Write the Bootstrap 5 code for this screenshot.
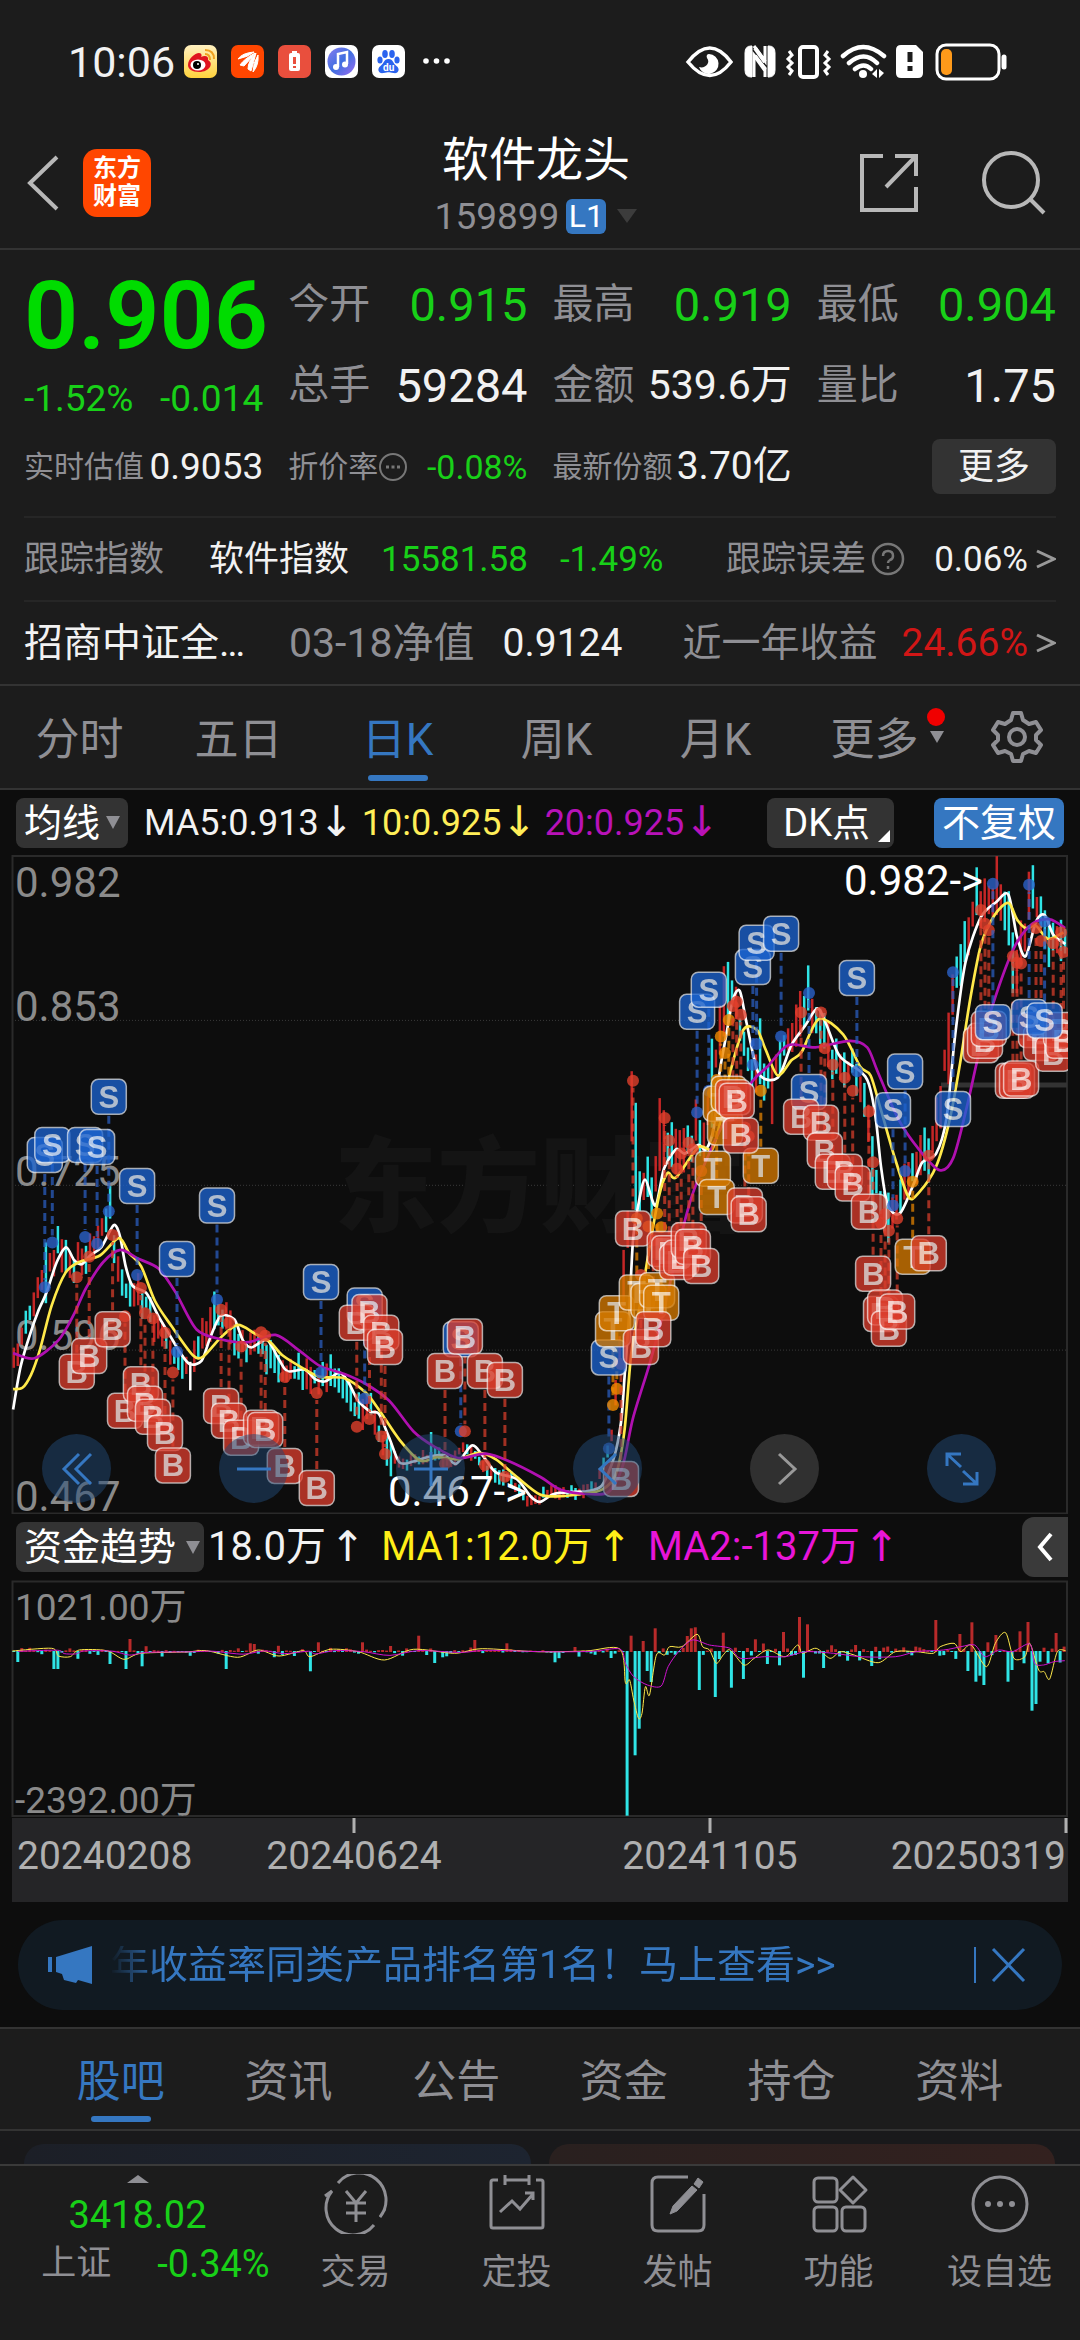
<!DOCTYPE html>
<html lang="zh-CN" data-bs-theme="dark">
<head>
<meta charset="utf-8">
<meta name="viewport" content="width=device-width, initial-scale=1">
<title>软件龙头 159899</title>
<link rel="stylesheet" href="https://cdn.jsdelivr.net/npm/bootstrap@5.3.0/dist/css/bootstrap.min.css">
<style>
:root{--ink:#f2f2f2;--dim:#8f8f94;--up:#d11616;--down:#18d018;--accent:#3577c1;--panel:#1c1c1c;--deep:#0d0d0d;--rule:#333}
body{font-family:Roboto,"Noto Sans CJK SC",sans-serif;background:var(--panel);color:var(--ink);line-height:1;overflow-x:hidden}
button,a,select{font-family:inherit;color:inherit;line-height:inherit}
a{text-decoration:none}
svg{display:block;flex:none}
.plain{background:none;border:0;padding:0}
.dim{color:var(--dim)}.down{color:var(--down)}.rise{color:var(--up)}
.status{height:122px;padding:0 70px 0 68px}
.clock{font-size:43px;margin-right:9px;padding-top:2px}
.app-ico{margin-right:14px}
.head{height:128px;border-bottom:2px solid var(--rule);padding:0 34px 0 26px;display:grid;grid-template-columns:1fr auto 1fr;align-items:center}
.head>.side{padding-bottom:5px}
.logo{width:68px;height:68px;border-radius:14px;background:#ff4600;color:#fff;font-size:24px;line-height:28px;font-weight:700;padding-top:5px;text-align:center;margin-left:24px}
.ttl{font-size:47px;line-height:58px;font-weight:400;margin:0;padding-top:4px}
.code{font-size:37px;height:54px;gap:7px}
.lv{background:var(--accent);color:#fff;width:40px;height:35px;border-radius:6px;font-size:32px;line-height:35px;text-align:center}
.tri{width:0;height:0;border:10px solid transparent;border-top:14px solid #3c3c3c;border-bottom:0}
.quote{padding:14px 24px 0;border-bottom:2px solid var(--rule)}
.q4{display:grid;grid-template-columns:repeat(4,minmax(0,1fr));column-gap:25px}
.q4>div{display:flex;justify-content:space-between;align-items:center;white-space:nowrap}
.est{height:90px;padding-bottom:9px}
.big{font-size:95px;font-weight:600;color:#00dc00;line-height:104px}
.stack{grid-row:span 2;flex-direction:column;align-items:stretch!important;justify-content:flex-start!important}
.f41{font-size:41px;height:81px}.v46{font-size:47px}.v40{font-size:41px}
.f36{font-size:37px}.f30{font-size:30px}.f35{font-size:35px}.f39{font-size:39px}.f34{font-size:34px}
.more{background:#333;border-radius:8px;width:124px;height:55px;font-size:36px;margin-left:auto}
.line{border-top:2px solid #262626;height:84px;display:flex;align-items:center;white-space:nowrap}
.period{height:104px;border-bottom:2px solid var(--rule);display:grid;grid-template-columns:repeat(6,159fr) 126fr;font-size:44px}
.tabbar{height:104px;border:2px solid var(--rule);border-width:2px 0;display:grid;grid-template-columns:repeat(6,1fr);padding:0 37px;font-size:44px}
.tab-i{display:flex;align-items:center;justify-content:center;position:relative;color:var(--dim);padding-top:5px}
button.tab-i{padding-top:0}
.tab-i.on{color:var(--accent)}
.tab-i.on::after{content:"";position:absolute;bottom:7px;width:60px;height:6px;border-radius:3px;background:var(--accent)}
.dot{position:absolute;right:9px;top:22px;width:18px;height:18px;border-radius:50%;background:#f00000}
.caret{position:absolute;right:10px;top:45px;border:7px solid transparent;border-top:12px solid #8f8f94;border-bottom:0}
.deep{background:var(--deep);padding-bottom:17px}
.bar1{height:60px;padding:5px 16px 0;font-size:36px;white-space:nowrap}
.bar2{height:66px;padding:0 12px 0 16px;font-size:40px;white-space:nowrap}
.chip{background:#333;border-radius:8px;height:50px;font-size:38px;padding:0 8px;color:#fff;display:flex;align-items:center;gap:2px;position:relative}
.chip i{border:7px solid transparent;border-top:13px solid #8f8f94;border-bottom:0}
.arw{font-family:"DejaVu Sans",sans-serif;font-size:42px;line-height:36px;vertical-align:-1px}
.fold{width:46px;height:60px;background:#3a3a3a;border-radius:12px 0 0 12px;display:flex;align-items:center;justify-content:center}
.ctl{position:absolute;left:42px;right:84px;bottom:11px;display:flex;justify-content:space-between}
.ctl button{width:69px;height:69px;border-radius:50%;background:rgba(34,74,118,.5);display:flex;align-items:center;justify-content:center;color:#3577c1}
.ctl .off{background:rgba(58,58,58,.8);color:#999}
.note{margin:18px 18px 0;height:90px;border-radius:45px;background:#111a22;color:var(--accent);font-size:39px;padding:0 36px 0 28px;white-space:nowrap}
.note a{color:var(--accent);-webkit-mask-image:linear-gradient(90deg,transparent,#000 50px);mask-image:linear-gradient(90deg,transparent,#000 50px)}
.peek{height:33px;padding:13px 25px 0 24px;gap:18px;background:#19191b}
.peek div{flex:1;border-radius:26px 26px 0 0;background:linear-gradient(90deg,#1c1f27,#1d2430)}
.peek div+div{background:linear-gradient(90deg,#29201f,#33211f)}
.foot{border-top:2px solid #3a3a3a;display:grid;grid-template-columns:275fr repeat(5,161fr);height:176px;font-size:35px}
.foot a{display:flex;flex-direction:column;align-items:center;color:var(--dim);padding-top:8px}
.foot svg{margin-bottom:21px}
.foot .upmark{margin:1px 0 12px}
.idx{font-size:38px;line-height:40px}
.idx-row{gap:46px;line-height:40px;padding:9px 0 0 36px}
</style>
<script src="https://cdn.jsdelivr.net/npm/bootstrap@5.3.0/dist/js/bootstrap.bundle.min.js"></script>
</head>
<body>
<div class="status d-flex align-items-center">
  <span class="clock">10:06</span>
  <svg class="app-ico" width="33" height="33" viewBox="0 0 33 33"><defs><linearGradient id="wb" x2="0" y2="1"><stop stop-color="#fff0c0"/><stop offset="1" stop-color="#ffd23c"/></linearGradient></defs><rect width="33" height="33" rx="7" fill="url(#wb)"/><path d="M4 20C4 14 11 8 15 8c3 0 3 3 2 4 4-2 8-1 7 3 6 3 2 12-9 12C8 27 4 24 4 20z" fill="#e01420"/><ellipse cx="14" cy="20" rx="7.500" ry="5.500" fill="#fff"/><circle cx="13" cy="20" r="4" fill="#000"/><circle cx="14" cy="19" r="1" fill="#fff"/><path d="M21 9q5 0 5 6M21 5q9 0 9 9" stroke="#f0a020" stroke-width="2" fill="none"/></svg>
  <svg class="app-ico" width="33" height="33" viewBox="0 0 33 33"><rect width="33" height="33" rx="7" fill="#ff4600"/><path d="M7 14Q11 8 23 7Q17 12 7 14zM9 20Q13 14 24 8Q19 15 13 21zM17 24Q17 16 25 8Q23 16 20 26zM22 27Q22 18 27 10Q28 20 22 27z" fill="#fff" stroke="#fff"/></svg>
  <svg class="app-ico" width="33" height="33" viewBox="0 0 33 33"><rect width="33" height="33" rx="7" fill="#e94f3d"/><rect x="11" y="8" width="11" height="18" rx="2" fill="#fff"/><path d="M14 6h5v3h-5z" fill="#fff"/><path d="M16.500 12v7M16.500 21v2" stroke="#e94f3d" stroke-width="3"/></svg>
  <svg class="app-ico" width="33" height="33" viewBox="0 0 33 33"><defs><linearGradient id="mu" x2="1" y2="1"><stop stop-color="#8a7cf0"/><stop offset=".5" stop-color="#3f6fe0"/><stop offset="1" stop-color="#9b6cf0"/></linearGradient></defs><rect width="33" height="33" rx="7" fill="#fff"/><circle cx="16.500" cy="16.500" r="14" fill="url(#mu)"/><path d="M13 22V9l9-2v12" stroke="#fff" stroke-width="2.500" fill="none"/><circle cx="11" cy="22" r="3" fill="#fff"/><circle cx="20" cy="19.500" r="3" fill="#fff"/></svg>
  <svg class="app-ico" width="33" height="33" viewBox="0 0 33 33"><rect width="33" height="33" rx="7" fill="#fff"/><g fill="#2a63ee"><ellipse cx="13" cy="9" rx="2.800" ry="4"/><ellipse cx="20" cy="9" rx="2.800" ry="4"/><ellipse cx="8" cy="15" rx="2.600" ry="3.600"/><ellipse cx="25" cy="15" rx="2.600" ry="3.600"/><path d="M16.500 14c5 0 4 4 8 7s2 8-3 7-5-1-10 0-7-4-3-7 3-7 8-7z"/></g><text x="11" y="26" font-size="10" font-weight="700" fill="#fff">du</text></svg>
  <svg class="ms-1" width="28" height="8" viewBox="0 0 28 8" fill="#fff"><circle cx="3" cy="4" r="2.800"/><circle cx="13.500" cy="4" r="2.800"/><circle cx="24" cy="4" r="2.800"/></svg>
  <svg class="ms-auto" width="325" height="40" viewBox="0 0 325 40" fill="none" stroke="#fff" stroke-width="3.500">
    <path d="M3 21Q25-7 46 21Q25 48 3 21z"/><path d="M24 13a10 10 0 1 1-10 13c6 2 12-4 8-9-1-2 0-4 2-4z" fill="#fff" stroke="none"/>
    <path d="M66 5q-6 0-6 7v17q0 7 6 7h1V5zM84 5q6 0 6 7v17q0 7-6 7h-1V5z" fill="#fff" stroke-width="1"/><path d="M69 36V14l11 13v9M69 5l11 15V5" stroke-width="3"/><path d="M70 7l10 14M70 15l10 14" stroke-width="4"/>
    <rect x="115" y="6" width="17" height="30" rx="3" stroke-width="4"/><path d="M104 10l3 4-4 4 4 4-4 4 4 4-3 4M143 10l-3 4 4 4-4 4 4 4-4 4 3 4" stroke-width="3"/>
    <path d="M158 15q20-18 41 0M164 22q15-13 28 0M170 28q9-7 16 0" stroke-width="4.500" stroke-linecap="round"/><circle cx="178" cy="33" r="4" fill="#fff" stroke="none"/><path d="M187 33l5-5v9zM194 28v9l5-5z" fill="#fff" stroke="none"/>
    <path d="M216 4h15l7 7v21q0 5-5 5h-17q-5 0-5-5V9q0-5 5-5z" fill="#fff" stroke="none"/><path d="M225 11v10M225 25v5" stroke="#1c1c1c" stroke-width="5"/>
    <rect x="252" y="4" width="62" height="34" rx="9" stroke-width="3"/><rect x="256" y="8" width="11" height="26" rx="5" fill="#ff9a1a" stroke="none"/><path d="M319 16v10" stroke-width="5" stroke-linecap="round"/>
  </svg>
</div>

<header class="head">
  <div class="side d-flex align-items-center">
    <button class="plain" aria-label="返回"><svg width="33" height="58" viewBox="0 0 33 58" fill="none" stroke="#b8b8b8" stroke-width="4"><path d="M31 3L4 29l27 26"/></svg></button>
    <div class="logo">东方<br>财富</div>
  </div>
  <div class="text-center">
    <h1 class="ttl">软件龙头</h1>
    <div class="code d-flex align-items-center justify-content-center dim"><span>159899</span><span class="lv">L1</span><span class="tri ms-1"></span></div>
  </div>
  <div class="side d-flex justify-content-end align-items-center" style="gap:62px">
    <button class="plain" aria-label="分享"><svg width="60" height="60" viewBox="0 0 60 60" fill="none" stroke="#b8b8b8" stroke-width="4"><path d="M24 3H3v54h54V34M36 3h21v20M57 3L27 34"/></svg></button>
    <button class="plain" aria-label="搜索"><svg width="65" height="65" viewBox="0 0 65 65" fill="none" stroke="#b8b8b8" stroke-width="4"><circle cx="30" cy="30" r="27"/><path d="M49 49l14 14"/></svg></button>
  </div>
</header>

<section class="quote">
  <div class="q4">
    <div class="stack"><div class="big">0.906</div><div class="d-flex justify-content-between f36 down pt-2 mt-1"><span>-1.52%</span><span>-0.014</span></div></div>
    <div class="f41"><span class="dim">今开</span><span class="v46 down">0.915</span></div>
    <div class="f41"><span class="dim">最高</span><span class="v46 down">0.919</span></div>
    <div class="f41"><span class="dim">最低</span><span class="v46 down">0.904</span></div>
    <div class="f41"><span class="dim">总手</span><span class="v46">59284</span></div>
    <div class="f41"><span class="dim">金额</span><span class="v40">539.6万</span></div>
    <div class="f41"><span class="dim">量比</span><span class="v46">1.75</span></div>
  </div>
  <div class="q4 est">
    <div class="f30"><span class="dim">实时估值</span><span class="f36">0.9053</span></div>
    <div class="f30"><span class="dim d-flex">折价率<svg width="30" height="30" viewBox="0 0 30 30" fill="none" stroke="#777" stroke-width="2"><circle cx="15" cy="15" r="13"/><path d="M8 15h3M13.500 15h3M19 15h3" stroke-width="3"/></svg></span><span class="f34 down">-0.08%</span></div>
    <div class="f30"><span class="dim">最新份额</span><span class="f39">3.70亿</span></div>
    <div><button class="plain more">更多</button></div>
  </div>
  <a href="#" class="line f35"><span class="dim" style="width:185px">跟踪指数</span><span>软件指数</span><span class="down ms-4 ps-2">15581.58</span><span class="down ms-4 ps-2">-1.49%</span><span class="dim ms-auto d-flex align-items-center">跟踪误差<svg class="ms-1" width="36" height="36" viewBox="0 0 36 36" fill="none" stroke="#777" stroke-width="2.500"><circle cx="18" cy="18" r="15"/><path d="M13 15q0-5 5-5t5 5q0 3-3 4-2 1-2 3M18 25v3"/></svg></span><span class="ms-4 ps-1">0.06%</span><svg class="ms-2" width="20" height="20" viewBox="0 0 20 20" fill="none" stroke="#999" stroke-width="3"><path d="M1 2l17 8-17 8"/></svg></a>
  <a href="#" class="line f39"><span style="width:265px">招商中证全…</span><span class="dim v40">03-18净值</span><span class="ms-4 ps-1">0.9124</span><span class="dim ms-auto">近一年收益</span><span class="rise ms-4">24.66%</span><svg class="ms-2" width="20" height="20" viewBox="0 0 20 20" fill="none" stroke="#999" stroke-width="3"><path d="M1 2l17 8-17 8"/></svg></a>
</section>

<nav class="period">
  <a class="tab-i" href="#">分时</a><a class="tab-i" href="#">五日</a><a class="tab-i on" href="#">日K</a><a class="tab-i" href="#">周K</a><a class="tab-i" href="#">月K</a>
  <a class="tab-i" href="#">更多<i class="dot"></i><i class="caret"></i></a>
  <button class="plain tab-i" aria-label="设置"><svg width="54" height="54" viewBox="0 0 54 54" fill="none" stroke="#8f8f94" stroke-width="4" stroke-linejoin="round"><path d="M23 3h8l2 7 6 4 7-2 5 8-5 5v5l5 5-5 8-7-2-6 3-2 7h-8l-2-7-6-3-7 2-5-8 5-5v-5l-5-5 5-8 7 2 6-4z"/><circle cx="27" cy="27" r="8"/></svg></button>
</nav>

<main class="deep">
  <div class="bar1 d-flex align-items-center">
    <button class="plain chip">均线<i class="ms-1"></i></button>
    <span class="ms-3">MA5:0.913<span class="arw">↓</span></span>
    <span class="ms-2" style="color:#ffee58">10:0.925<span class="arw">↓</span></span>
    <span class="ms-2" style="color:#b812b8">20:0.925<span class="arw">↓</span></span>
    <button class="plain chip ms-auto ps-3 pe-4">DK点<svg class="position-absolute bottom-0 end-0 m-1" width="12" height="14" fill="#fff"><path d="M12 0v12H0z"/></svg></button>
    <button class="plain chip px-2" style="background:#3577c1;margin-left:40px">不复权</button>
  </div>
  <div class="position-relative">
    <svg id="kline" width="100%" viewBox="0 0 1080 664" role="img" aria-label="日K线图"></svg>
    <div class="ctl">
      <button class="plain" aria-label="最早"><svg width="36" height="36" fill="none" stroke="currentColor" stroke-width="3"><path d="M20 3L5 18l15 15M32 3L17 18l15 15"/></svg></button>
      <button class="plain" aria-label="缩小"><svg width="36" height="36" fill="none" stroke="currentColor" stroke-width="3"><path d="M1 18h34"/></svg></button>
      <button class="plain" aria-label="放大"><svg width="36" height="36" fill="none" stroke="currentColor" stroke-width="3"><path d="M1 18h34M18 1v34"/></svg></button>
      <button class="plain" aria-label="向左"><svg width="36" height="36" fill="none" stroke="currentColor" stroke-width="3"><path d="M26 3L10 18l16 15"/></svg></button>
      <button class="plain off" aria-label="向右"><svg width="36" height="36" fill="none" stroke="currentColor" stroke-width="3"><path d="M12 3l16 15-16 15"/></svg></button>
      <button class="plain" aria-label="全屏"><svg width="36" height="36" fill="none" stroke="currentColor" stroke-width="3"><path d="M3 15V3h14M3 3l14 13M33 21v12H19M33 33L19 20"/></svg></button>
    </div>
  </div>
  <div class="bar2 d-flex align-items-center">
    <button class="plain chip f36 pe-1">资金趋势<i class="ms-2"></i></button>
    <span class="ms-1">18.0万<span class="arw ms-1">↑</span></span>
    <span class="ms-3" style="color:#ffee18">MA1:12.0万<span class="arw ms-1">↑</span></span>
    <span class="ms-3" style="color:#e815d8">MA2:-137万<span class="arw ms-1">↑</span></span>
    <button class="plain fold ms-auto" aria-label="展开"><svg width="18" height="30" fill="none" stroke="#fff" stroke-width="4"><path d="M15 2L4 15l11 13"/></svg></button>
  </div>
  <svg id="flow" width="100%" viewBox="0 0 1080 322" role="img" aria-label="资金趋势"></svg>
  <div class="note d-flex align-items-center">
    <svg width="48" height="40" viewBox="0 0 48 40" fill="#3577c1" class="me-3"><path d="M2 12h4v15H2zM10 12L46 1v38l-14-4-2 3-12-3-2-6-6-2z"/></svg>
    <a href="#">年收益率同类产品排名第1名！马上查看&gt;&gt;</a>
    <button class="plain ms-auto" aria-label="关闭"><svg width="52" height="36" viewBox="0 0 52 36" fill="none" stroke="#3577c1" stroke-width="3"><path d="M1 0v36" stroke-width="2"/><path d="M19 2l31 32M50 2L19 34"/></svg></button>
  </div>
</main>

<nav class="tabbar">
  <a class="tab-i on" href="#">股吧</a><a class="tab-i" href="#">资讯</a><a class="tab-i" href="#">公告</a><a class="tab-i" href="#">资金</a><a class="tab-i" href="#">持仓</a><a class="tab-i" href="#">资料</a>
</nav>
<div class="peek d-flex"><div></div><div></div></div>

<footer class="foot">
  <a href="#"><svg class="upmark" width="22" height="8" fill="#8f8f94"><path d="M11 0l11 8H0z"/></svg><span class="idx down">3418.02</span><span class="d-flex idx-row"><span>上证</span><span class="down idx">-0.34%</span></span></a>
  <a href="#"><svg width="66" height="60" viewBox="0 0 66 60" fill="none" stroke="#8f8f94" stroke-width="3"><path d="M15 9A27 27 0 0 1 57 43l5-8M51 51A27 27 0 0 1 9 17l-7 5M23 17l10 12 10-12M23 29h20M23 39h20M33 29v19"/></svg>交易</a>
  <a href="#"><svg width="60" height="60" viewBox="0 0 60 60" fill="none" stroke="#8f8f94" stroke-width="3"><path d="M11 6H6q-2 0-2 2v44q0 2 2 2h48q2 0 2-2V8q0-2-2-2h-5M18 6h24M18 1v10M42 1v10M13 38l12-11 8 8 13-15M38 19h8v7"/></svg>定投</a>
  <a href="#"><svg width="60" height="60" viewBox="0 0 60 60" fill="none" stroke="#8f8f94" stroke-width="3"><path d="M40 3H10q-6 0-6 6v42q0 6 6 6h40q6 0 6-6V20"/><path d="M50 4l5 4-4 6-5-4zM44 12l5 4-20 21-7 3 3-8z" fill="#8f8f94" stroke-width="1"/></svg>发帖</a>
  <a href="#"><svg width="60" height="60" viewBox="0 0 60 60" fill="none" stroke="#8f8f94" stroke-width="3"><rect x="5" y="4" width="23" height="24" rx="4"/><rect x="5" y="33" width="23" height="24" rx="4"/><rect x="33" y="33" width="23" height="24" rx="4"/><path d="M44 3l13 13-13 13-13-13z" stroke-linejoin="round"/></svg>功能</a>
  <a href="#"><svg width="60" height="60" viewBox="0 0 60 60" fill="none" stroke="#8f8f94" stroke-width="3"><circle cx="30" cy="30" r="27"/><g fill="#8f8f94" stroke="none"><circle cx="18" cy="30" r="3"/><circle cx="30" cy="30" r="3"/><circle cx="42" cy="30" r="3"/></g></svg>设自选</a>
</footer>

<script>
// Series are stored in chart units; X() and Y() turn them into view box units.
const X=v=>+(v*.3444).toFixed(1), Y=v=>+(v*.4337).toFixed(1);
const join=(a,b)=>a.concat(b.map(p=>[p[0]+1568,p[1]]));
let seed=11; const rnd=()=>(seed=(seed*16807)%2147483647)/2147483647;
function at(s,x){for(let i=1;i<s.length;i++)if(x<=s[i][0]){const[a,b]=s[i-1],[c,d]=s[i];return b+(d-b)*(x-a)/(c-a||1)}return s[s.length-1][1]}
function smooth(pts,fx,fy){const p=pts.map(q=>[fx(q[0]),fy(q[1])]);let d='M'+p[0];for(let i=0;i<p.length-1;i++){const a=p[i-1]||p[i],b=p[i],c=p[i+1],e=p[i+2]||c;d+=`C${(b[0]+(c[0]-a[0])/7).toFixed(1)},${(b[1]+(c[1]-a[1])/7).toFixed(1)} ${(c[0]-(e[0]-b[0])/7).toFixed(1)},${(c[1]-(e[1]-b[1])/7).toFixed(1)} ${c}`}return d}
const ma5=join([[38,1290],[60,1190],[90,1110],[110,1065],[135,1020],[165,950],[192,916],[215,945],[237,955],[262,935],[295,915],[330,865],[348,890],[365,960],[385,1005],[425,1022],[460,1075],[490,1115],[520,1155],[550,1185],[585,1178],[610,1125],[640,1075],[680,1082],[705,1130],[730,1147],[775,1130],[810,1175],[835,1202],[885,1198],[915,1220],[945,1225],[985,1205],[1010,1225],[1040,1270],[1075,1295],[1100,1300],[1130,1355],[1160,1412],[1200,1410],[1240,1400],[1290,1395],[1325,1415],[1370,1373],[1400,1395],[1440,1435],[1500,1450],[1540,1490]],
[[0,1503],[40,1485],[100,1480],[140,1478],[180,1465],[215,1400],[235,1320],[245,1220],[258,1080],[270,900],[285,820],[305,760],[335,820],[360,735],[395,690],[420,700],[460,680],[482,690],[505,640],[520,520],[540,430],[560,345],[580,325],[600,400],[635,515],[690,525],[730,450],[770,405],[805,365],[830,400],[870,475],[930,510],[955,540],[975,620],[990,730],[1010,820],[1045,838],[1085,770],[1110,720],[1150,700],[1180,620],[1205,430],[1235,260],[1280,155],[1325,120],[1360,103],[1385,200],[1410,245],[1440,165],[1465,150],[1490,195],[1525,217]]);
const ma10=join([[38,1243],[65,1240],[90,1210],[115,1155],[150,1050],[190,975],[230,950],[290,935],[345,895],[375,930],[410,960],[450,1040],[500,1100],[560,1165],[590,1168],[640,1125],[690,1095],[740,1115],[785,1135],[820,1165],[880,1195],[930,1215],[1000,1218],[1060,1250],[1100,1290],[1160,1360],[1220,1408],[1270,1400],[1330,1405],[1390,1390],[1440,1405],[1500,1445]],
[[0,1486],[60,1490],[120,1485],[180,1475],[220,1440],[245,1340],[265,1160],[290,1050],[315,930],[345,800],[370,745],[395,755],[460,685],[500,690],[525,620],[550,520],[590,415],[630,415],[655,460],[690,520],[730,485],[760,465],[810,390],[880,425],[930,500],[960,520],[990,600],[1030,710],[1070,800],[1100,790],[1150,730],[1190,620],[1220,490],[1250,340],[1280,220],[1320,150],[1360,122],[1385,160],[1410,180],[1440,175],[1475,205],[1520,190]]);
const ma20=join([[38,1160],[100,1172],[170,1130],[215,1070],[250,1010],[300,950],[350,922],[400,942],[460,965],[510,1020],[570,1105],[640,1128],[720,1135],[800,1118],[870,1155],[930,1190],[1000,1208],[1060,1230],[1130,1270],[1200,1340],[1260,1375],[1330,1402],[1410,1392],[1480,1410]],
[[0,1445],[60,1475],[140,1485],[200,1480],[240,1420],[270,1310],[320,1180],[360,1060],[400,920],[440,800],[480,720],[540,620],[620,530],[660,500],[720,450],[800,455],[900,440],[950,455],[980,510],[1040,620],[1100,690],[1160,738],[1200,710],[1240,590],[1280,450],[1330,320],[1380,220],[1430,170],[1480,160],[1525,180]]);
const spikes=[[130,905,1045,0],[165,867,930,0],[316,775,850,0],[618,1018,1105,0],[549,1180,1246,2],[1256,1342,1400,0],[1838,510,672,1],[1850,583,830,0],[1816,922,1060,1],[1885,707,800,0],[1919,572,740,1],[1931,600,745,1],[2001,635,700,0],[2024,575,670,1],[2070,435,640,0],[2106,268,430,1],[2117,258,400,0],[2210,388,540,0],[2245,500,632,1],[2326,325,430,1],[2349,266,370,0],[2535,660,860,0],[2582,790,905,0],[2756,375,540,1],[2836,40,150,0],[2848,95,180,1],[2895,14,150,1],[2930,95,220,0],[2942,190,330,0],[2953,230,330,1],[2989,50,160,1],[3000,35,135,0],[3046,160,270,0]];
let k='';
for(const y of[393,773,1153])k+=`<path d="M12 ${Y(y)}H1067" stroke="#3a3a3a" stroke-dasharray="1 2"/>`;
k+='<path d="M12.500 6H1067V663.500H12.500z" fill="none" stroke="#2a2a2a" stroke-width="2"/>';
k+='<text x="540" y="374" text-anchor="middle" font-size="103" font-weight="900" fill="#141414">东方财富</text><path d="M941 235H1067" stroke="#333" stroke-width="5"/>';
[['0.982',108],['0.853',394],['0.725',774],['0.596',1153],['0.467',1524]].forEach(l=>k+=`<text x="15" y="${Y(l[1])}" font-size="42" fill="#8a8a8a">${l[0]}</text>`);
for(let i=0,x=40;x<3094;i++,x+=11.65){
  const s=spikes.find(q=>Math.abs(q[0]-x)<5.9);let a,b,c;
  if(s){[,a,b,c]=s}else{const p=at(ma5,Math.min(x+22,3092)),v=(x>1570&&x<1780||x>1150&&x<1570?14:x>1800?42:30),m=p+(rnd()-.5)*v*.8;a=m-v*(.4+rnd());b=m+v*(.4+rnd());c=at(ma5,Math.min(x+35,3092))<p?(rnd()<.72):(rnd()<.32)}
  k+=`<path d="M${X(x)} ${Y(Math.max(14,a))}V${Y(Math.min(b,1532))}" stroke="${c===2?'#fff':c?'#c42626':'#2fe4e6'}" stroke-width="2.500"/>`}
[[ma5,'#fff'],[ma10,'#ffe94a'],[ma20,'#b010b0']].forEach(m=>k+=`<path d="${smooth(m[0],X,Y)}" fill="none" stroke="${m[1]}" stroke-width="2.700"/>`);
const R=a=>a.map(q=>[q[0]+1568,q[1],q[2]]);
const marks={
S:[[130,703,1008],[152,680,905],[247,680,892],[282,685,908],[316,569,833],[398,775,980],[514,943,1157],[630,820,1037],[932,996,1205],[1059,1050,1265],[1338,1128,1340]].concat(R([[200,1170,1380],[456,373,605],[490,322,555],[618,270,495],[629,214,447],[700,193,430],[781,558,330],[920,295,510],[1025,600,820],[1060,511,740],[1199,597,282]])),
T:R([[212,1105,1280],[223,1068,1242],[281,1020,850],[315,1040,868],[340,1015,838],[352,1044,870],[525,585,430],[537,640,468],[548,562,392],[502,735,560],[513,800,530],[641,728,555],[1082,938,765]]),
B:[[223,1203,985],[259,1167,938],[327,1105,888],[363,1293,1075],[409,1232,1010],[421,1277,1068],[444,1307,1080],[479,1344,1113],[502,1419,1205],[642,1282,1060],[665,1316,1090],[700,1355,1145],[758,1332,1112],[770,1337,1120],[827,1420,1215],[920,1471,1252],[1036,1090,1330],[1073,1065,1312],[1107,1113,1352],[1118,1146,1393],[1292,1201,1415],[1350,1122,1340],[1408,1201,1418],[1466,1222,1445]].concat(R([[235,1450,1185],[270,873,532],[293,1146,980],[329,1105,900],[362,920,618],[375,930,670],[398,950,735],[410,940,700],[432,900,675],[444,915,690],[468,959,740],[560,570,360],[571,578,350],[583,658,380],[595,820,640],[606,840,660],[758,615,375],[816,629,375],[827,693,457],[850,742,495],[885,742,525],[908,769,555],[955,834,603],[967,977,720],[990,1070,860],[1002,1055,840],[1013,1104,878],[1037,1064,850],[1129,930,705],[1280,450,138],[1292,440,170],[1303,412,185],[1373,532,245],[1385,532,260],[1397,527,262],[1440,415,180],[1455,445,210],[1490,470,215],[1513,415,190],[1520,440,235]])),
U:R([[1315,397,78],[1420,385,80],[1465,393,165]])};
const hue={S:['#2b62c9','#1c64d0'],U:['#2b62c9','#1c64d0'],T:['#f08a00','#d67a00'],B:['#e0402c','#da3d2c']};
let stems='',tags='';
for(const t of['S','T','B','U'])for(const[x,y,d]of marks[t]){
  const dir=d>y?1:-1,cx=X(x),cy=Y(y);
  stems+=`<path d="M${cx} ${cy+dir*19}V${Y(d)-dir*7}" stroke="${hue[t][0]}" stroke-width="3" stroke-dasharray="8 5" opacity=".7"/><circle cx="${cx}" cy="${Y(d)}" r="6" fill="${hue[t][0]}" opacity=".8"/>`;
  tags+=`<g opacity=".85"><rect x="${(cx-17.5).toFixed(1)}" y="${(cy-17.5).toFixed(1)}" width="35" height="35" rx="7" fill="${hue[t][1]}" fill-opacity=".9" stroke="#fff" stroke-opacity=".75" stroke-width="1.500"/><text x="${cx}" y="${(cy+11).toFixed(1)}" font-family="Liberation Sans" font-size="31" font-weight="700" fill="#fff" fill-opacity=".78" text-anchor="middle">${t==='U'?'S':t}</text></g>`}
k+=`<clipPath id="plot"><path d="M12 5H1068V664H12z"/></clipPath><g clip-path="url(#plot)">${stems}${tags}</g>`;
k+='<text x="844" y="45" font-size="42" fill="#fff">0.982-&gt;</text><text x="388" y="656" font-size="42" fill="#fff">0.467-&gt;</text>';
document.getElementById('kline').innerHTML=k;

// Capital flow: bars around the zero line, with two moving averages.
const FX=v=>+(v*.6888).toFixed(1), FY=v=>+(v/3-80).toFixed(1);
const big={25:486,77:507,83:507,159:492,182:507,188:417,205:499,362:430,368:432,327:507,449:514,461:427,525:427,606:407,630:489,688:420,733:430,803:487,885:474,908:947,914:407,920:766,926:686,931:423,937:513,943:546,949:385,996:408,1001:385,1007:382,1018:570,1036:591,1053:398,1059:563,1082:537,1094:418,1117:492,1129:496,1135:396,1158:351,1164:533,1170:498,1175:373,1193:504,1210:436,1228:482,1245:435,1263:545,1268:498,1361:360,1396:402,1408:513,1413:367,1419:545,1425:527,1431:555,1437:427,1443:243,1448:405,1465:545,1471:510,1478:394,1489:490,1495:366,1501:632,1506:612,1512:485,1524:490,1536:399};
let f='<path d="M12.500 1.500H1067V236H12.500z" fill="none" stroke="#2a2a2a" stroke-width="2"/><path d="M12 238H1068V322H12z" fill="#252527"/>';
f+='<g font-size="37" fill="#8a8a8a"><text x="15" y="40">1021.00万</text><text x="15" y="233">-2392.00万</text></g>';
const bars={},slot=x=>Math.round((x-20)/5.82);
for(const q in big)bars[slot(+q)]=big[q];
for(let i=0;i<263;i++){const x=20+i*5.82;if(x>1546)break;const v=bars[i]||453+(rnd()-.42)*(x>950?60:44)*rnd();
  const top=Math.min(v,453),bot=Math.max(v,456);f+=`<path d="M${FX(x)} ${FY(top)}V${FY(bot)}" stroke="${v<453?'#b82a2a':'#2fe4e6'}" stroke-width="3"/>`}
const tail1=[[900,447],[908,548],[914,540],[920,600],[927,655],[932,640],[937,560],[943,585],[953,465],[965,465],[972,440],[990,440],[1012,403],[1020,440],[1030,450],[1040,490],[1050,465],[1060,450],[1080,495],[1095,475],[1115,450],[1140,470],[1158,435],[1165,460],[1185,445],[1205,475],[1220,455],[1240,465],[1275,488],[1300,455],[1330,455],[1355,460],[1365,440],[1385,430],[1395,455],[1410,435],[1432,500],[1445,430],[1460,398],[1472,475],[1488,470],[1495,430],[1508,510],[1516,515],[1524,537],[1535,455],[1547,452]];
const tail2=[[900,447],[908,490],[920,530],[940,555],[960,558],[970,500],[985,455],[1005,420],[1030,435],[1060,445],[1075,475],[1110,470],[1140,470],[1170,455],[1210,460],[1250,470],[1300,470],[1330,455],[1370,450],[1395,440],[1415,435],[1430,470],[1450,450],[1470,455],[1495,432],[1502,490],[1515,495],[1530,485],[1546,482]];
const h1=[[18,453],[75,445],[85,468],[102,470],[115,450],[155,452],[180,478],[205,460],[270,456],[300,452],[345,472],[375,450],[405,468],[440,452],[450,470],[480,448],[520,455],[558,480],[600,448],[660,460],[700,446],[780,455],[850,453]];
const h2=h1.map(p=>[p[0]+8,455+(p[1]-455)*.45]);
f+=`<path d="${smooth(h1.concat(tail1),FX,FY)}" fill="none" stroke="#ffe94a"/><path d="${smooth(h2.concat(tail2),FX,FY)}" fill="none" stroke="#d012d0"/>`;
f+='<path d="M354 238v15M710 238v15M1066 238v15" stroke="#b0b0b0" stroke-width="3"/><g font-size="39" fill="#b0b0b0"><text x="17" y="289">20240208</text><text x="354" y="289" text-anchor="middle">20240624</text><text x="710" y="289" text-anchor="middle">20241105</text><text x="1066" y="289" text-anchor="end">20250319</text></g>';
document.getElementById('flow').innerHTML=f;
</script>
</body>
</html>
